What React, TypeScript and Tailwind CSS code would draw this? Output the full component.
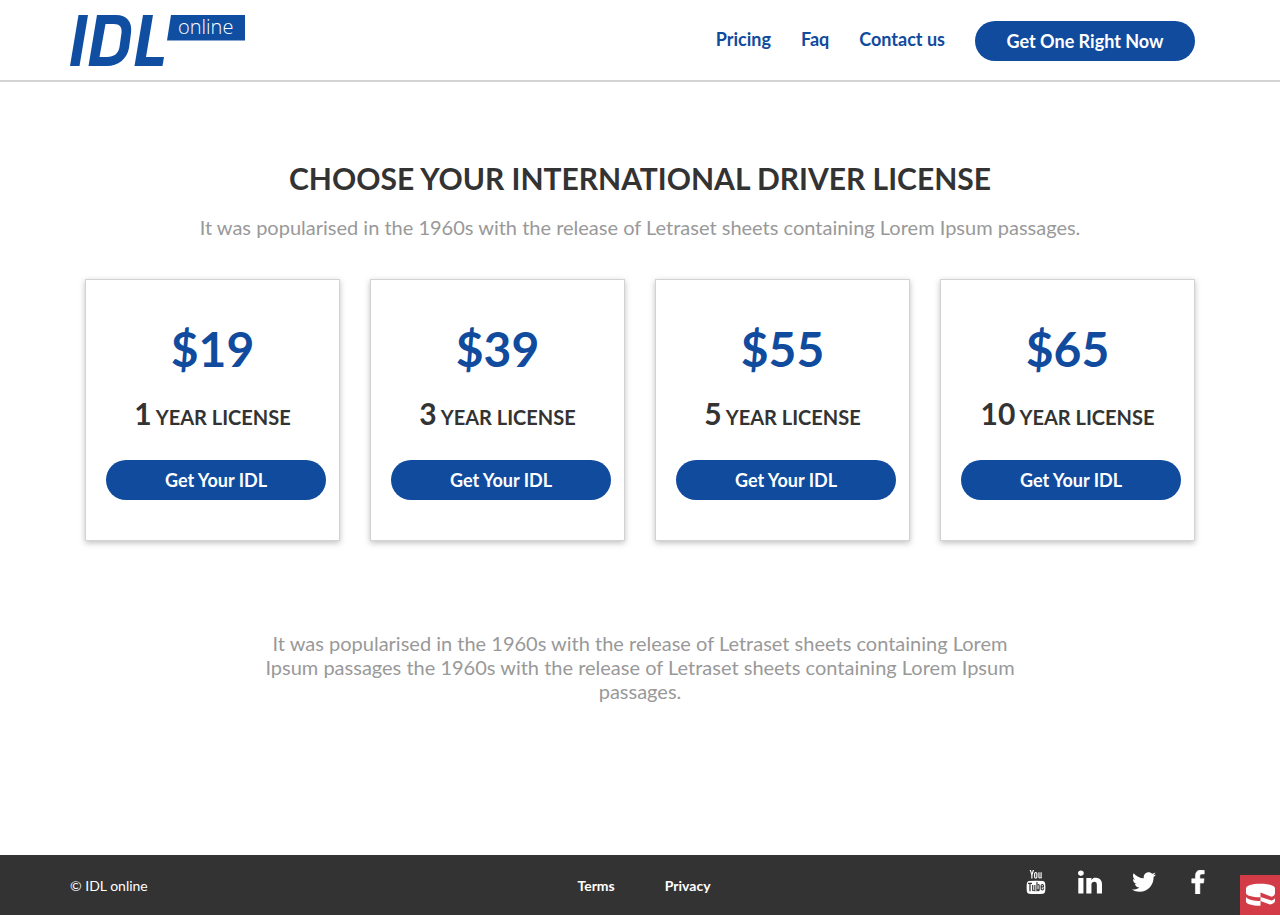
import React from "react";
import { FaTwitter } from "react-icons/fa";

const plans = [
  { price: "$19", years: 1 },
  { price: "$39", years: 3 },
  { price: "$55", years: 5 },
  { price: "$65", years: 10 },
];

const pill =
  "flex h-10 w-[220px] shrink-0 items-center justify-center rounded-full bg-[#104b9e] text-lg font-bold text-white";

function Logo() {
  return (
    <svg className="h-[51px] w-[175px] overflow-visible" viewBox="0 0 175 51" role="img" aria-label="IDL online">
      <g fill="#104ea2">
        <path d="M8.5 0H18L9.5 51H0Z" />
        <path
          fillRule="evenodd"
          d="M27 0H46C57 0 62.500 7 61 18L59 33C57 44 48 51 37 51H18.500ZM35.500 9L29.500 42H37C44 42 48.500 38.500 49.500 32L51.500 18C52.300 12 49.500 9 44 9Z"
        />
        <path d="M73 0H83L76 42H94L92.500 51H64.500Z" />
        <path d="M101 0H175V25.500H97Z" />
      </g>
      <text x="108" y="19" fill="#fff" fontSize="20" fontFamily="'Open Sans', sans-serif" fontWeight="300">
        online
      </text>
    </svg>
  );
}

function YoutubeIcon() {
  return (
    <svg className="h-6 w-6" viewBox="-180 0 1896 1896" fill="currentColor" aria-hidden="true">
      <path d="M971 1244v211q0 67-39 67q-23 0-45-22v-301q22-22 45-22q39 0 39 67zM1309 1245v46h-90v-46q0-68 45-68t45 68zM343 1107h107v-94h-312v94h105v569h100v-569zM631 1676h89v-494h-89v378q-30 42-57 42q-18 0-21-21q-1-3-1-35v-364h-89v391q0 49 8 73q12 37 58 37q48 0 102-61v54zM1060 1457v-197q0-73-9-99q-17-56-71-56q-50 0-93 54v-217h-89v734h89v-53q45 55 93 55q54 0 71-55q9-27 9-100zM1398 1447v-13h-91q0 51-2 61q-7 36-40 36q-46 0-46-69v-87h179v-103q0-79-27-116q-39-51-106-51q-68 0-107 51q-28 37-28 116v173q0 79 29 116q39 51 108 51q72 0 108-53q18-27 21-54q2-9 2-58zM790 525v-210q0-69-43-69t-43 69v210q0 70 43 70t43-70zM1509 1374q0 234-26 350q-14 59-58 99t-102 46q-184 21-555 21t-555-21q-58-6-102.500-46t-57.500-99q-26-112-26-350q0-234 26-350q14-59 58-99t103-47q183-20 554-20t555 20q58 7 102.500 47t57.500 99q26 112 26 350zM511 0h102l-121 399v271h-100v-271q-14-74-61-212q-37-103-65-187h106l71 263zM881 333v175q0 81-28 118q-38 51-106 51q-67 0-105-51q-28-38-28-118v-175q0-80 28-117q38-51 105-51q68 0 106 51q28 37 28 117zM1216 171v499h-91v-55q-53 62-103 62q-46 0-59-37q-8-24-8-75v-394h91v367q0 33 1 35q3 22 21 22q27 0 57-43v-381h91z" />
    </svg>
  );
}

function LinkedinIcon() {
  return (
    <svg className="h-6 w-6" viewBox="0 434 1536 1468" fill="currentColor" aria-hidden="true">
      <path d="M349 911v991h-330v-991h330zM370 605q1 73-50.500 122t-135.500 49h-2q-82 0-132-49t-50-122q0-74 51.500-122.500t134.500-48.500t133 48.500t51 122.500zM1536 1334v568h-329v-530q0-105-40.500-164.500t-126.500-59.500q-63 0-105.500 34.500t-63.500 85.500q-11 30-11 81v553h-329q2-399 2-647t-1-296l-1-48h329v144h-2q20-32 41-56t56.500-52t87-43.500t114.500-15.500q171 0 275 113.500t104 332.500z" />
    </svg>
  );
}

function FacebookIcon() {
  return (
    <svg className="h-6 w-6" viewBox="-305 128 1664 1664" fill="currentColor" aria-hidden="true">
      <path
        d="M959 140v264h-157q-86 0-116 36t-30 108v189h293l-39 296h-254v759h-306v-759h-255v-296h255v-218q0-186 104-288.500t277-102.500q147 0 228 12z"
        stroke="currentColor"
        strokeWidth="40"
      />
    </svg>
  );
}

export default function App() {
  return (
    <div className="flex min-h-screen flex-col bg-white font-['Lato',sans-serif] text-[#333]">
      <header className="border-b-2 border-[#d3d3d3]">
        <div className="mx-auto flex h-20 max-w-[1140px] items-center justify-between pr-[15px]">
          <a href="#home">
            <Logo />
          </a>
          <div className="flex items-center gap-[30px] pt-0.5">
            <nav className="flex gap-[30px] pb-1 text-lg font-bold text-[#104b9e]">
              <a href="#pricing">Pricing</a>
              <a href="#faq">Faq</a>
              <a href="#contact">Contact us</a>
            </nav>
            <a href="#order" className={pill}>
              Get One Right Now
            </a>
          </div>
        </div>
      </header>

      <main id="pricing" className="mx-auto w-full max-w-[1140px] grow px-[15px] pt-[76px] text-center">
        <h1 className="text-[30px] leading-10 font-bold">CHOOSE YOUR INTERNATIONAL DRIVER LICENSE</h1>
        <p className="mt-[17px] text-xl leading-6 text-[#999]">
          It was popularised in the 1960s with the release of Letraset sheets containing Lorem Ipsum passages.
        </p>
        <ul className="mt-10 grid grid-cols-4 gap-[30px]">
          {plans.map((plan) => (
            <li
              key={plan.years}
              className="border border-[#d3d3d3] px-5 pt-[39px] pb-10 shadow-[0_2px_6px_rgba(0,0,0,0.25)]"
            >
              <p className="text-5xl leading-[60px] font-bold text-[#104b9e]">{plan.price}</p>
              <h2 className="mt-[14px] text-xl leading-10 font-bold">
                <span className="text-[30px]">{plan.years}</span> YEAR LICENSE
              </h2>
              <a href="#order" className={`${pill} mt-[23px]`}>
                Get Your IDL
              </a>
            </li>
          ))}
        </ul>
        <p className="mx-auto mt-[90px] max-w-[750px] text-xl leading-6 text-[#999]">
          It was popularised in the 1960s with the release of Letraset sheets containing Lorem Ipsum passages the 1960s
          with the release of Letraset sheets containing Lorem Ipsum passages.
        </p>
      </main>

      <footer className="relative bg-[#333] text-sm text-white">
        <div className="mx-auto grid h-[60px] max-w-[1140px] grid-cols-3 items-center pt-0.5">
          <p>© IDL online</p>
          <nav className="flex justify-center gap-[50px] pl-2 font-bold">
            <a href="#terms">Terms</a>
            <a href="#privacy">Privacy</a>
          </nav>
          <div className="flex justify-end gap-[30px] pb-2">
            <a href="#youtube" aria-label="YouTube">
              <YoutubeIcon />
            </a>
            <a href="#linkedin" aria-label="LinkedIn">
              <LinkedinIcon />
            </a>
            <a href="#twitter" aria-label="Twitter">
              <FaTwitter className="h-6 w-6" />
            </a>
            <a href="#facebook" aria-label="Facebook">
              <FacebookIcon />
            </a>
          </div>
        </div>
        <button
          type="button"
          aria-label="Toggle debug toolbar"
          className="absolute right-0 bottom-0 flex h-10 w-10 items-center justify-center bg-[#d33c47]"
        >
          <svg className="h-10 w-10" viewBox="0 0 40 40" fill="#fff" aria-hidden="true">
            <path d="M6 13.500C6 10.500 12 8.700 20.500 8.700S35 10.500 35 13.500V18C35 20 33.500 21.200 31.500 21.800L20.500 17.500V22.300C12 22.300 6 20.500 6 18Z" />
            <path d="M6 22C8 24.700 14 26 20.500 26V30.800C12 30.800 6 29 6 26.500ZM20.500 22L31.500 25.500C33.500 25 35 23.800 35 22.500V26C35 28 32.500 29 30 29.500L20.500 26Z" />
          </svg>
        </button>
      </footer>
    </div>
  );
}
